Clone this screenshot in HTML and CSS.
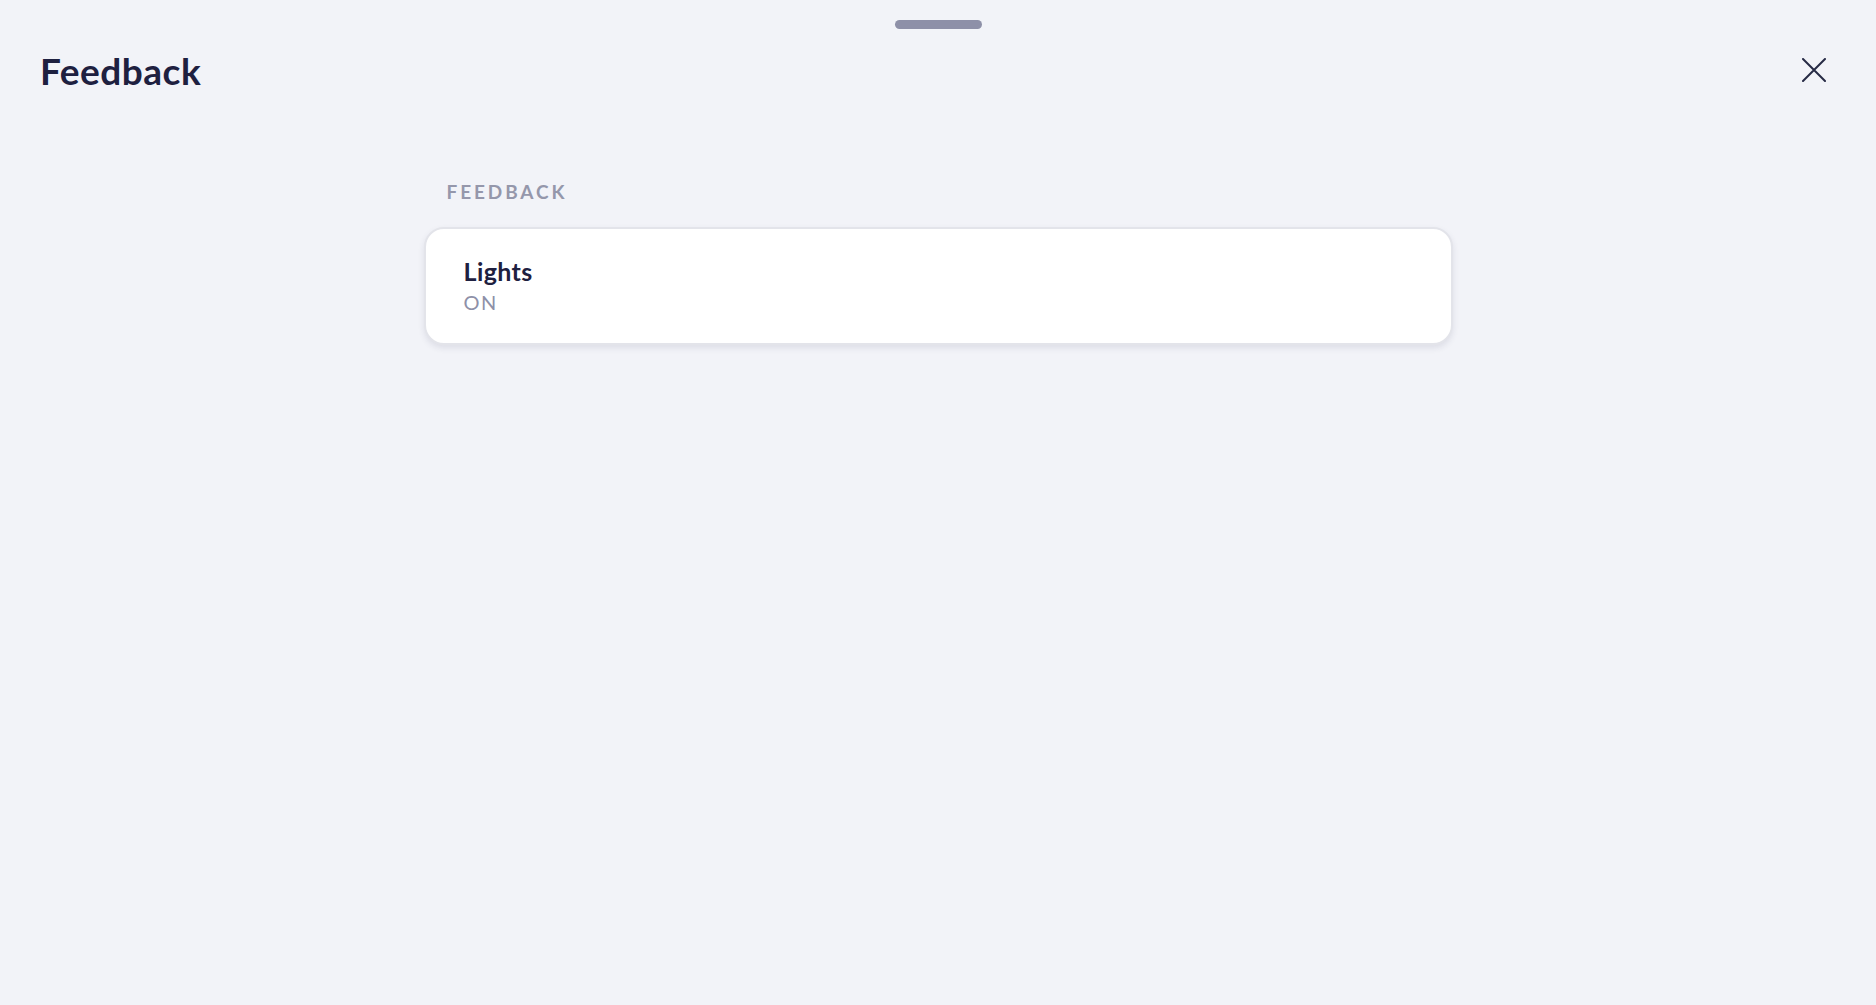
FILE: index.html
```html
<!DOCTYPE html>
<html lang="en">
<head>
    <meta charset="UTF-8">
    <meta name="viewport" content="width=device-width, initial-scale=1.0">
    <title>Feedback</title>
    <link rel="stylesheet" href="styles.css">
</head>
<body>
    <div class="sheet">
        <div class="handle"></div>

        <header class="sheet-header">
            <h1>Feedback</h1>
            <button class="close-btn" aria-label="Close">
                <svg width="24" height="24" viewBox="0 0 24 24">
                    <path d="M1 1 L23 23 M23 1 L1 23" stroke="#272a45" stroke-width="2" stroke-linecap="round" fill="none"/>
                </svg>
            </button>
        </header>

        <section class="feedback-section">
            <h2 class="section-label">FEEDBACK</h2>
            <div class="feedback-card">
                <div class="item-name">Lights</div>
                <div class="item-value">ON</div>
            </div>
        </section>
    </div>
</body>
</html>
```

FILE: styles.css
```css
html, body {
    margin: 0;
    height: 100%;
}

body {
    font-family: 'Lato', 'Noto Sans', Arial, sans-serif;
    background: #f2f3f8;
    color: #1e2040;
}

.sheet {
    min-height: 100%;
    padding: 20px 0 0;
    box-sizing: border-box;
}

.handle {
    width: 87px;
    height: 9px;
    border-radius: 5px;
    background: #8e90a8;
    margin: 0 auto;
}

.sheet-header {
    display: flex;
    align-items: center;
    justify-content: space-between;
    padding: 0 50px 0 40px;
    height: 82px;
}

.sheet-header h1 {
    margin: 0;
    font-size: 37px;
    font-weight: 700;
    color: #1e2040;
    letter-spacing: 0.5px;
}

.close-btn {
    background: none;
    border: none;
    padding: 0;
    width: 24px;
    height: 24px;
    cursor: pointer;
    display: flex;
}

.feedback-section {
    width: 1029px;
    margin: 70px auto 0;
}

.section-label {
    margin: 0 0 24px 23px;
    font-size: 19px;
    font-weight: 700;
    letter-spacing: 2.9px;
    color: #9597ab;
    line-height: 22px;
}

.feedback-card {
    background: #fff;
    border: 2px solid #e3e4ea;
    border-radius: 20px;
    box-shadow: 0 3px 6px rgba(40, 44, 80, 0.1);
    padding: 28px 38px 24px;
    height: 118px;
    box-sizing: border-box;
}

.item-name {
    font-size: 25px;
    font-weight: 700;
    color: #1e2040;
    line-height: 28px;
    letter-spacing: 0.4px;
}

.item-value {
    font-size: 20px;
    color: #8e90a8;
    letter-spacing: 1.5px;
    line-height: 28px;
    margin-top: 3px;
}
```
